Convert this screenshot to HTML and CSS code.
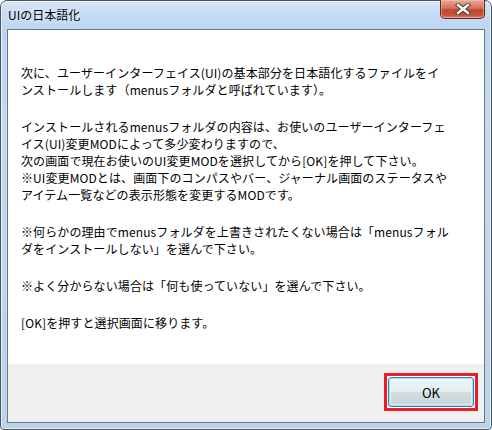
FILE: index.html
```html
<!DOCTYPE html>
<html lang="ja">
<head>
<meta charset="utf-8">
<link rel="stylesheet" href="styles.css">
</head>
<body>
<div class="window">
  <div class="titlebar">
    <span class="title">UIの日本語化</span>
    <div class="close">
      <svg width="16" height="12" viewBox="0 0 16 12">
        <path d="M3 2 L13 10 M13 2 L3 10" stroke="#3a3a3a" stroke-width="4.2" stroke-linecap="square" fill="none"/>
        <path d="M3 2 L13 10 M13 2 L3 10" stroke="#ffffff" stroke-width="2.4" stroke-linecap="square" fill="none"/>
      </svg>
    </div>
  </div>
  <div class="client">
    <div class="content">
      <p class="line">次に、ユーザーインターフェイス(UI)の基本部分を日本語化するファイルをイ</p>
      <p class="line">ンストールします（menusフォルダと呼ばれています）。</p>
      <p class="gap"></p>
      <p class="line">インストールされるmenusフォルダの内容は、お使いのユーザーインターフェ</p>
      <p class="line">イス(UI)変更MODによって多少変わりますので、</p>
      <p class="line">次の画面で現在お使いのUI変更MODを選択してから[OK]を押して下さい。</p>
      <p class="line">※UI変更MODとは、画面下のコンパスやバー、ジャーナル画面のステータスや</p>
      <p class="line">アイテム一覧などの表示形態を変更するMODです。</p>
      <p class="gap"></p>
      <p class="line">※何らかの理由でmenusフォルダを上書きされたくない場合は「menusフォル</p>
      <p class="line">ダをインストールしない」を選んで下さい。</p>
      <p class="gap"></p>
      <p class="line">※よく分からない場合は「何も使っていない」を選んで下さい。</p>
      <p class="gap"></p>
      <p class="line">[OK]を押すと選択画面に移ります。</p>
    </div>
    <div class="footer">
      <div class="highlight">
        <button class="ok">OK</button>
      </div>
    </div>
  </div>
</div>
</body>
</html>
```

FILE: styles.css
```css
html, body {
  margin: 0;
  padding: 0;
  background: #ffffff;
}
body {
  width: 492px;
  height: 430px;
  overflow: hidden;
  font-family: "Noto Sans CJK JP", "Noto Sans", sans-serif;
  font-size: 12px;
  color: #000;
}
.window {
  box-sizing: border-box;
  width: 492px;
  height: 430px;
  border: 1px solid #4a5560;
  border-radius: 7px 7px 4px 4px;
  background: linear-gradient(180deg, #d6e6f7 0px, #c3dbf4 14px, #bcd6f2 28px, #c4daf1 120px, #bcd3ec 430px);
  box-shadow: inset 0 0 0 1px rgba(255,255,255,0.65);
  display: flex;
  flex-direction: column;
}
.titlebar {
  height: 28px;
  flex: none;
  display: flex;
  align-items: flex-start;
  justify-content: space-between;
}
.title {
  margin: 6px 0 0 7px;
  font-size: 12px;
  line-height: 16px;
  color: #000;
  text-shadow: 0 0 6px rgba(255,255,255,0.9);
}
.close {
  width: 45px;
  height: 19px;
  margin: -1px 6px 0 0;
  box-sizing: border-box;
  border: 1px solid #5a2a22;
  border-top: none;
  border-radius: 0 0 5px 5px;
  background: linear-gradient(180deg, #e9a897 0%, #d6705c 45%, #c2442f 55%, #c9543d 85%, #dd8a70 100%);
  box-shadow: inset 0 0 0 1px rgba(255,200,180,0.5);
  display: flex;
  align-items: center;
  justify-content: center;
}
.close svg {
  display: block;
}
.client {
  flex: 1;
  margin: 0 6px 6px 6px;
  border: 1px solid #6a7888;
  display: flex;
  flex-direction: column;
  background: #ffffff;
}
.content {
  flex: 1;
  background: #ffffff;
  padding: 34px 0 0 13px;
}
.line {
  margin: 0;
  line-height: 17px;
  white-space: nowrap;
  letter-spacing: 0.1px;
}
.gap {
  margin: 0;
  height: 20px;
}
.footer {
  height: 58px;
  flex: none;
  background: #f0f0f0;
  display: flex;
  justify-content: flex-end;
  align-items: flex-start;
  padding: 9px 6px 0 0;
  box-sizing: border-box;
}
.highlight {
  border: 3px solid #ed1c24;
  padding: 1px;
  background: #ffffff;
  display: flex;
}
.ok {
  width: 86px;
  height: 30px;
  margin: 0;
  padding: 0;
  border: 1px solid #3c7fb1;
  border-radius: 3px;
  background: linear-gradient(180deg, #eef5f8 0%, #e6eef2 48%, #d4dde2 52%, #cbd4d9 100%);
  box-shadow: inset 0 0 0 1px #8fe4fb, inset 0 0 0 2px rgba(255,255,255,0.5);
  font-family: "Noto Sans CJK JP", "Noto Sans", sans-serif;
  font-size: 13px;
  color: #000;
  cursor: default;
}
```
